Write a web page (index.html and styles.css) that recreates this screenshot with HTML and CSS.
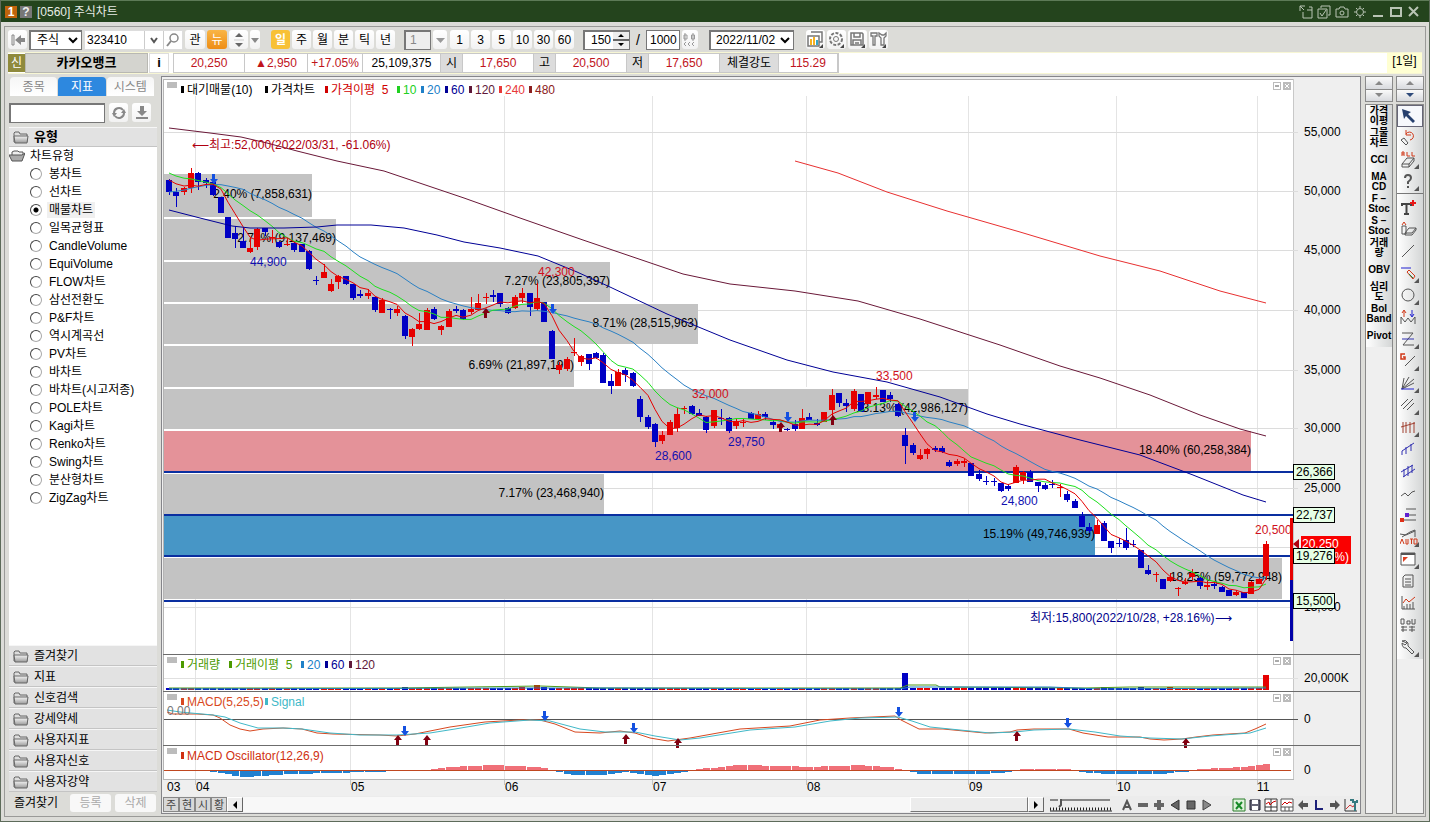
FILE: index.html
```html
<!DOCTYPE html>
<html lang="ko">
<head>
<meta charset="utf-8">
<title>[0560] 주식차트</title>
<link rel="stylesheet" href="styles.css">
</head>
<body>
<header class="titlebar">
  <span class="badge badge-orange">1</span><span class="badge badge-gray">?</span>
  <h1 class="title">[0560] 주식차트</h1>
  <div class="window-buttons">
    <button aria-label="분리"><svg width="14" height="14"><path d="M1 1h5M1 1v5M1 1l4 4M4 7v6h9V5H8M10 2h3v3" /></svg></button>
    <button aria-label="복사"><svg width="14" height="14"><path d="M4 3V1h9v9h-2M1 4h9v9H1zM3 8l2 3 4-6" /></svg></button>
    <button aria-label="캡처"><svg width="14" height="14"><path d="M1 4h3l1-2h4l1 2h3v8H1z" /><circle cx="7" cy="8" r="2" /></svg></button>
    <button aria-label="설정"><svg width="14" height="14"><circle cx="7" cy="7" r="3.5" /><path d="M7 1v2M7 11v2M1 7h2M11 7h2M3 3l1 1M10 10l1 1M11 3l-1 1M4 10l-1 1" /></svg></button>
    <button aria-label="최소화" class="big"><svg width="14" height="14"><path d="M2 11h10" /></svg></button>
    <button aria-label="최대화" class="big"><svg width="14" height="14"><path d="M2 3h10v8H2z" /></svg></button>
    <button aria-label="닫기" class="big"><svg width="14" height="14"><path d="M2 2l9 9M11 2l-9 9" /></svg></button>
  </div>
</header>

<main class="frame">
  <div class="toolbar">
    <button class="tool back" aria-label="처음"><svg width="16" height="14"><path d="M2 2v10h2V2z" fill="#eee" stroke="#888" /><path d="M15 5h-4V2L5 7l6 5V9h4z" fill="#888" /></svg></button>
    <select class="kind" aria-label="종류"><option>주식</option></select>
    <div class="code-box">
      <input class="code" aria-label="종목코드" value="323410">
      <button aria-label="목록"><svg width="10" height="8"><path d="M2 2l3 4 3-4" fill="none" stroke="#555" stroke-width="2" /></svg></button>
      <button aria-label="검색"><svg width="14" height="14"><circle cx="8" cy="5" r="4" fill="none" stroke="#888" stroke-width="1.5" /><path d="M5 8l-4 5" stroke="#888" stroke-width="2" /></svg></button>
    </div>
    <button class="tool w20">관</button>
    <button class="tool w20 orange">뉴</button>
    <button class="tool" aria-label="위아래"><svg width="10" height="16"><path d="M1 5l4-4 4 4zM1 11l4 4 4-4z" fill="#666" /><path d="M0 8h10" stroke="#ccc" /></svg></button>
    <button class="tool w10" aria-label="더보기"><svg width="8" height="6"><path d="M0 1h8l-4 5z" fill="#888" /></svg></button>
    <div class="group periods">
      <button class="tool yellow">일</button><button class="tool">주</button><button class="tool">월</button><button class="tool">분</button><button class="tool">틱</button><button class="tool">년</button>
    </div>
    <div class="group">
      <input class="unit" aria-label="단위" value="1" disabled>
      <button class="tool w14" aria-label="단위 목록"><svg width="9" height="6"><path d="M0 1h9l-4.500 5z" fill="#999" /></svg></button>
    </div>
    <div class="group minutes">
      <button class="tool">1</button><button class="tool">3</button><button class="tool">5</button><button class="tool">10</button><button class="tool">30</button><button class="tool">60</button>
    </div>
    <div class="group counts">
      <div class="spin"><input aria-label="표시 개수" value="150"><button aria-label="증감"><svg width="16" height="18"><path d="M5 6l3-3 3 3zM5 12l3 3 3-3z" fill="#000" /><path d="M0 9h16" stroke="#666" stroke-width="2" /></svg></button></div>
      <span class="slash">/</span>
      <input class="total" aria-label="전체 개수" value="1000">
      <button class="tool w16" aria-label="축소"><svg width="16" height="16"><path d="M2 3h3v4H2zM3 1v8M11 1v8M9.500 3h3v4h-3z" stroke="#999" fill="none" /><path d="M4 10l-2 2 2 2M8 10l-2 2 2 2M12 10l-2 2 2 2" fill="none" stroke="#999" /></svg></button>
    </div>
    <select class="date" aria-label="날짜"><option>2022/11/02</option></select>
    <div class="group icons">
      <button class="tool" aria-label="차트 설정"><svg width="17" height="17"><path d="M4 1h11v10h-3M1 5h11v10H1z" fill="#fff" stroke="#777" stroke-width="1.500" /><path d="M3 8h2v6H3z" fill="#f5b120" /><path d="M6 6h2v8H6z" fill="#f5b120" /><path d="M9 9h2v5H9z" fill="#35a6c8" /><path d="M16 17h-4l4-4z" fill="#444" /></svg></button>
      <button class="tool" aria-label="환경 설정"><svg width="17" height="17"><circle cx="8" cy="8" r="6" fill="none" stroke="#777" stroke-width="2" stroke-dasharray="3 1.500" /><circle cx="8" cy="8" r="2.500" fill="none" stroke="#777" /><path d="M16 17h-4l4-4z" fill="#444" /></svg></button>
      <button class="tool" aria-label="저장"><svg width="17" height="17"><path d="M2 2h11l1 1v11H2zM5 2v4h6V2M4 14V9h8v5M6 12h4" fill="none" stroke="#777" stroke-width="1.500" /><path d="M16 17h-4l4-4z" fill="#444" /></svg></button>
      <button class="tool" aria-label="도구"><svg width="17" height="17"><path d="M1 2h6v3H5v9H3V5H1zM9 2v3l2 2v7h3V7l2-2V2l-2 2h-2z" fill="none" stroke="#777" stroke-width="1.300" /><path d="M16 17h-4l4-4z" fill="#444" /></svg></button>
    </div>
  </div>

  <div class="quote">
    <span class="credit">신</span><strong class="name">카카오뱅크</strong><button class="info">i</button>
    <div class="cells">
      <span class="up c71">20,250</span><span class="up c63">▲2,950</span><span class="up c55">+17.05%</span><span class="c77">25,109,375</span><span class="label c22">시</span><span class="up c71">17,650</span><span class="label c22">고</span><span class="up c71">20,500</span><span class="label c22">저</span><span class="up c71">17,650</span><span class="label c60">체결강도</span><span class="up c60">115.29</span>
    </div>
    <span class="cycle">[1일]</span>
  </div>

  <div class="workspace">
    <aside class="sidebar">
      <div class="tabs"><button>종목</button><button class="active">지표</button><button>시스템</button></div>
      <div class="find">
        <input aria-label="지표 검색">
        <button class="tool" aria-label="새로고침"><svg width="14" height="14"><path d="M2 7a5 5 0 0 1 9-3M12 7a5 5 0 0 1-9 3" fill="none" stroke="#888" stroke-width="2" /><path d="M0 7h5L2 11zM14 7H9l3-4z" fill="#888" /></svg></button>
        <button class="tool" aria-label="내려받기"><svg width="14" height="15"><path d="M5 1h4v5h3l-5 5-5-5h3zM1 12h12v2H1z" fill="#888" /></svg></button>
      </div>
      <button class="folder head"><svg width="16" height="14"><use href="#folder" /></svg>유형</button>
      <div class="tree">
        <div class="root"><svg width="16" height="14"><path d="M3 6V3l2-1h4l1 1h4v3" fill="#eee" stroke="#555" /><path d="M0 6h13l3-2-3 8H3z" fill="#aaa" stroke="#555" /></svg>차트유형</div>
        <label><input type="radio" name="t"><span>봉차트</span></label>
        <label><input type="radio" name="t"><span>선차트</span></label>
        <label><input type="radio" name="t" checked><span>매물차트</span></label>
        <label><input type="radio" name="t"><span>일목균형표</span></label>
        <label><input type="radio" name="t"><span>CandleVolume</span></label>
        <label><input type="radio" name="t"><span>EquiVolume</span></label>
        <label><input type="radio" name="t"><span>FLOW차트</span></label>
        <label><input type="radio" name="t"><span>삼선전환도</span></label>
        <label><input type="radio" name="t"><span>P&amp;F차트</span></label>
        <label><input type="radio" name="t"><span>역시계곡선</span></label>
        <label><input type="radio" name="t"><span>PV차트</span></label>
        <label><input type="radio" name="t"><span>바차트</span></label>
        <label><input type="radio" name="t"><span>바차트(시고저종)</span></label>
        <label><input type="radio" name="t"><span>POLE차트</span></label>
        <label><input type="radio" name="t"><span>Kagi차트</span></label>
        <label><input type="radio" name="t"><span>Renko차트</span></label>
        <label><input type="radio" name="t"><span>Swing차트</span></label>
        <label><input type="radio" name="t"><span>분산형차트</span></label>
        <label><input type="radio" name="t"><span>ZigZag차트</span></label>
      </div>
      <button class="folder"><svg width="16" height="14"><use href="#folder" /></svg>즐겨찾기</button>
      <button class="folder"><svg width="16" height="14"><use href="#folder" /></svg>지표</button>
      <button class="folder"><svg width="16" height="14"><use href="#folder" /></svg>신호검색</button>
      <button class="folder"><svg width="16" height="14"><use href="#folder" /></svg>강세약세</button>
      <button class="folder"><svg width="16" height="14"><use href="#folder" /></svg>사용자지표</button>
      <button class="folder"><svg width="16" height="14"><use href="#folder" /></svg>사용자신호</button>
      <button class="folder"><svg width="16" height="14"><use href="#folder" /></svg>사용자강약</button>
      <div class="favorite"><span>즐겨찾기</span><button disabled>등록</button><button disabled>삭제</button></div>
    </aside>

    <section class="chart">
      <svg id="plot" class="plot" role="img" aria-label="카카오뱅크 일봉 차트"></svg>
      <div class="scroll">
        <button>주</button><button>현</button><button>시</button><button>황</button>
        <button class="arrow" aria-label="왼쪽"><svg width="6" height="8"><path d="M5 0v8L1 4z" /></svg></button>
        <div class="track"><div class="thumb"></div></div>
        <button class="arrow" aria-label="오른쪽"><svg width="6" height="8"><path d="M1 0v8l4-4z" /></svg></button>
        <svg class="zoomer" width="64" height="16"><path d="M1 3h8M13 3h48" stroke="#888" stroke-width="2" /><path d="M12 2v6l-2 2" fill="none" stroke="#555" stroke-width="2" /><path d="M1 12h62" stroke="#222" stroke-width="3" stroke-dasharray="1 2" /><path d="M1 14h62" stroke="#222" /></svg>
        <div class="play">
          <button aria-label="자동"><svg width="12" height="12"><path d="M2 11L6 2l4 9M3 8h6" fill="none" stroke="#555" stroke-width="2" /></svg></button>
          <button aria-label="축소"><svg width="12" height="12"><path d="M1 4h10v4H1z" fill="#666" /></svg></button>
          <button aria-label="확대"><svg width="12" height="12"><path d="M4 1h4v3h3v4H8v3H4V8H1V4h3z" fill="#666" /></svg></button>
          <button aria-label="뒤로"><svg width="12" height="12"><path d="M10 1v10L2 6z" fill="#666" stroke="#333" /></svg></button>
          <button aria-label="정지"><svg width="12" height="12"><path d="M2 2h8v8H2z" fill="#666" stroke="#333" /></svg></button>
          <button aria-label="재생"><svg width="12" height="12"><path d="M2 1v10l8-5z" fill="#888" stroke="#444" /></svg></button>
        </div>
        <div class="play files">
          <button aria-label="엑셀"><svg width="14" height="14"><path d="M1 1h12v12H1z" fill="#dff2dc" stroke="#2b7f2b" /><path d="M4 4l6 7M10 4l-6 7" stroke="#188a28" stroke-width="2" /></svg></button>
          <button aria-label="저장"><svg width="14" height="14"><path d="M2 2h10v10H2z" fill="#667" stroke="#223" /><path d="M4 2h6v4H4zM4 8h6v4H4z" fill="#fff" /></svg></button>
          <button aria-label="차트"><svg width="14" height="14"><path d="M1 1h12v12H1zM7 1v12M1 9h12" fill="#fff" stroke="#333" /><path d="M2 6l3-2 1 3 3-3 3-1" fill="none" stroke="#c00" /></svg></button>
          <button aria-label="차트 2"><svg width="14" height="14"><path d="M1 1h12v12H1zM1 9h12M5 9v4M9 9v4" fill="#fff" stroke="#555" /><path d="M2 7l3-3 2 2 2-2 3 1" fill="none" stroke="#c00" /></svg></button>
          <button aria-label="이전"><svg width="14" height="14"><path d="M12 5H7V2L2 7l5 5V9h5z" fill="#555" /></svg></button>
          <button aria-label="L"><svg width="14" height="14"><path d="M4 2v9h7" fill="none" stroke="#1b1f78" stroke-width="2" /></svg></button>
          <button aria-label="다음"><svg width="14" height="14"><path d="M2 5h5V2l5 5-5 5V9H2z" fill="#555" /></svg></button>
          <button aria-label="도구"><svg width="14" height="14"><path d="M1 1v12h12" fill="none" stroke="#333" /><path d="M2 11l4-4 3 2 4-6" fill="none" stroke="#c33" /><path d="M6 2h3v2h4V2M11 4v9" fill="none" stroke="#367a80" stroke-width="2" /></svg></button>
        </div>
      </div>
    </section>

    <div class="strip">
      <div class="pager"><button aria-label="위로"><svg width="10" height="6"><path d="M1 5h8L5 1z" fill="#888" /></svg></button><button aria-label="아래로"><svg width="10" height="6"><path d="M1 1h8L5 5z" fill="#888" /></svg></button></div>
      <div class="list"><div class="items words">
        <button>가격<br>이평</button><button>그물<br>차트</button><button>CCI</button><button>MA<br>CD</button><button>F −<br>Stoc</button><button>S −<br>Stoc</button><button>거래<br>량</button><button>OBV</button><button>심리<br>도</button><button>Bol<br>Band</button><button>Pivot</button>
      </div></div>
    </div>
    <div class="strip">
      <div class="pager"><button aria-label="위로"><svg width="10" height="6"><path d="M1 5h8L5 1z" fill="#888" /></svg></button><button aria-label="아래로"><svg width="10" height="6"><path d="M1 1h8L5 5z" fill="#2e4a7a" /></svg></button></div>
      <div class="list"><div class="items tools" id="tools"></div></div>
    </div>
  </div>
</main>

<svg class="defs" width="0" height="0" aria-hidden="true">
  <linearGradient id="fold" x2="0" y2="1"><stop offset="0" stop-color="#f4f4f4" /><stop offset="1" stop-color="#9a9a9a" /></linearGradient>
  <symbol id="folder" viewBox="0 0 16 14"><path d="M1 12V3l1-1h4l1 2h7v8z" fill="#ddd" stroke="#666" /><path d="M1 6h14l-1 7H2z" fill="url(#fold)" stroke="#666" /></symbol>
</svg>
<script src="chart.js"></script>
</body>
</html>
```
FILE: styles.css
```css
* { box-sizing: border-box; }
body {
  margin: 0;
  min-height: 100vh;
  display: flex;
  flex-direction: column;
  background: #dcdcd8;
  border: 1px solid #5d6b5a;
  border-width: 0 1px 1px;
  font: 12px/16px "Liberation Sans", "Noto Sans CJK KR", sans-serif;
  color: #000;
}
button, input, select { font: inherit; color: inherit; margin: 0; padding: 0; border-radius: 0; }
button { border: 0; background: none; display: flex; align-items: center; justify-content: center; }
svg { display: block; flex: none; }
.defs { position: absolute; }

.titlebar { height: 22px; background: #24441d; border-top: 1px solid #5d7a57; display: flex; align-items: center; padding: 0 8px 0 4px; color: #e8ece6; }
.badge { width: 12px; height: 12px; font-weight: bold; line-height: 12px; text-align: center; margin-right: 3px; }
.badge-orange { background: #c0640c; color: #fff; }
.badge-gray { background: #777; color: #eee; }
.title { margin: 0 0 0 2px; font-size: 12px; font-weight: normal; flex: 1; }
.window-buttons { display: flex; gap: 4px; }
.window-buttons path, .window-buttons circle { fill: none; stroke: #b9c4b5; }
.window-buttons .big path { stroke-width: 2; }

.frame { flex: 1; display: flex; flex-direction: column; margin: 4px 3px 4px; border: 1px solid #9a9a98; }

.toolbar { height: 25px; display: flex; align-items: center; gap: 2px; padding: 0 3px; }
.tool { width: 19px; height: 19px; background: linear-gradient(#fff, #f2f2f2); border-radius: 3px; flex: none; }
.w20 { width: 20px; }
.w10 { width: 10px; }
.w14 { width: 14px; }
.w16 { width: 16px; }
.orange { background: linear-gradient(#f9b545, #ee8d15); color: #fff; }
.yellow { background: #f8c136; color: #fff; font-weight: bold; }
.group { display: flex; gap: 2px; align-items: center; }
.periods { margin-left: 9px; }
.group + .group { margin-left: 7px; }
.group.minutes { margin-left: 1px; }
select, .unit, .total, .spin { height: 20px; border: 1px solid #777; background: #fff; }
.kind { width: 53px; padding-left: 2px; border-width: 2px 1px 1px 2px; }
.code-box { display: flex; background: #fff; height: 20px; border: 1px solid #ddd; width: 99px; }
.code-box button { width: 19px; border-left: 1px solid #ccc; }
.code { flex: 1; min-width: 0; border: 0; padding-left: 2px; }
.unit { width: 27px; padding-left: 4px; background: #eee; color: #888; border-width: 2px 1px 1px 2px; }
.spin { width: 47px; display: flex; border-width: 2px 1px 1px 2px; }
.spin input { flex: 1; min-width: 0; border: 0; text-align: right; padding-right: 2px; }
.spin button { background: #eee; }
.slash { width: 12px; text-align: center; font-size: 14px; }
.total { width: 34px; padding-left: 3px; }
.date { width: 85px; margin-left: 9px; border-width: 2px 1px 1px 2px; padding-left: 1px; }
.icons { margin-left: 10px; }

.quote { height: 22px; display: flex; align-items: stretch; background: #fff; margin: 0 3px; border: 1px solid #f7f6d4; border-width: 1px 0; line-height: 20px; }
.credit { width: 17px; background: #8f8a3c; color: #fff; text-align: center; margin: 1px 0; line-height: 18px; }
.name { width: 123px; background: #d4d4cf; text-align: center; font-size: 13px; border: 1px solid #b8b8b2; line-height: 17px; }
.info { width: 20px; margin: 0 4px 0 1px; border: 1px solid #ddd; font-weight: bold; font-size: 13px; }
.cells { display: flex; border: 1px solid #c8c8c8; line-height: 18px; text-align: center; }
.cells span { border-right: 1px solid #c8c8c8; }
.cells .label { background: #dcdcdc; }
.up { color: #c0141c; }
.c71 { width: 71px; }
.c63 { width: 63px; }
.c55 { width: 55px; }
.c77 { width: 78px; }
.c22 { width: 22px; }
.c60 { width: 59px; }
.cycle { width: 35px; margin-left: auto; background: #ffffd2; text-align: center; line-height: 16px; }

.workspace { flex: 1; display: flex; padding: 2px 1px 2px 4px; }
.sidebar { width: 148px; display: flex; flex-direction: column; margin-right: 4px; }
.tabs { display: flex; height: 19px; margin: 1px 3px 0 1px; gap: 1px; color: #888; }
.tabs button { flex: 1; background: linear-gradient(#f6f6f6, #fff); border-radius: 4px 4px 0 0; }
.tabs .active { background: #2d88df; color: #fff; }
.find { display: flex; gap: 4px; height: 20px; margin: 7px 0 4px; }
.find input { width: 96px; border: 1px solid #777; border-width: 2px 1px 1px 2px; }
.folder { height: 21px; flex: none; background: #e2e2e2; border-top: 1px solid #f6f6f6; border-bottom: 1px solid #c4c4c4; justify-content: flex-start; gap: 5px; padding-left: 4px; }
.folder.head { font-weight: bold; font-size: 13px; height: 20px; }
.tree { flex: 1; background: #fff; }
.root, .tree label { height: 18px; display: flex; align-items: center; }
.root { gap: 5px; }
.tree label { padding-left: 21px; gap: 5px; }
.tree label span { padding: 0 2px; }
.tree input { appearance: none; width: 12px; height: 12px; border: 1px solid #aaa; border-top-color: #444; border-left-color: #444; border-radius: 50%; background: #fff; }
.tree input:checked { background: radial-gradient(#000 0 2px, #fff 3px); }
.tree input:checked + span { background: #f0f0f0; }
.favorite { display: flex; align-items: center; height: 22px; gap: 4px; padding-left: 5px; }
.favorite span { width: 52px; }
.favorite button { width: 41px; height: 18px; background: #f8f8f8; border-radius: 3px; color: #aaa; }

.chart { flex: 1; min-width: 0; display: flex; flex-direction: column; border: 1px solid #85858a; background: #efefef; }
.plot { width: 100%; flex: 1; min-height: 0; }
.plot text { font: 12px "Liberation Sans", "Noto Sans CJK KR", sans-serif; white-space: pre; }
.plot .small { font-size: 11px; }
.scroll { height: 17px; display: flex; align-items: center; background: #ececec; padding: 0 2px 0 1px; }
.scroll > button { width: 16px; height: 15px; border: 1px solid #888; background: #d8d8d8; color: #444; font-size: 11px; flex: none; }
.scroll > .arrow { background: #eee; border-color: #fff #666 #666 #fff; }
.track { flex: 1; height: 15px; background: #f8f8f8; display: flex; justify-content: flex-end; }
.thumb { width: 118px; background: #ececec; border: 1px solid; border-color: #fff #777 #777 #fff; }
.zoomer { margin: 0 8px 0 5px; }
.play { display: flex; gap: 4px; }
.files { gap: 2px; margin-left: 19px; }

.strip { width: 28px; display: flex; flex-direction: column; gap: 2px; margin-left: 4px; }
.strip + .strip { margin-left: 3px; }
.pager { border: 1px solid #8a8a8a; height: 26px; display: grid; background: #8a8a8a; gap: 1px; }
.pager button { background: linear-gradient(#fafafa, #d8dade); }
.list { flex: 1; border: 1px solid #8a8a8a; background: #efefef; }
.items { background: linear-gradient(90deg, #fff, #d4d6d6); }
.words { font-size: 10px; line-height: 10px; font-weight: bold; }
.items button { width: 100%; height: 22px; }
.tools .on { background: #f6f8fc; border: 1px solid #667; }
.tools .rule { border-top: 1px solid #777; height: 26px; padding-top: 3px; }
```
FILE: chart.js
```js
const NS = 'http://www.w3.org/2000/svg';
const plot = document.getElementById('plot');
const root = document.createElementNS(NS, 'g');
root.setAttribute('transform', 'translate(-162 -77)');
plot.append(root);

function el(tag, attrs, text) {
  const node = document.createElementNS(NS, tag);
  for (const key in attrs) node.setAttribute(key, attrs[key]);
  if (text !== undefined) node.textContent = text;
  root.append(node);
  return node;
}
const rect = (x, y, w, h, fill, stroke) => el('rect', { x, y, width: w, height: h, fill, stroke: stroke || 'none' });
const line = (x1, y1, x2, y2, stroke, w = 1) => rect(Math.min(x1, x2), Math.min(y1, y2), x1 === x2 ? w : x2 - x1, y1 === y2 ? w : y2 - y1, stroke);
const text = (x, y, str, fill = '#000', anchor = 'start', cls = '') => el('text', { x, y, fill, 'text-anchor': anchor, class: cls }, str);
const poly = (points, stroke) => el('polyline', { points, fill: 'none', stroke, 'stroke-width': 1 });

const RED = '#e60000', BLUE = '#0000c4';
const X0 = 169, STEP = 7.362;
const xAt = i => Math.round(X0 + STEP * i);

// Plot backgrounds and grid
rect(164, 80, 1129, 699, '#fff');
line(163, 79, 1294, 79, '#b4b4b4');
line(163, 79, 163, 780, '#b4b4b4');
line(1293, 79, 1293, 780, '#c8c8c8');
line(163, 779, 1294, 779, '#b4b4b4');
for (const x of [195, 350, 504, 652, 806, 968, 1116, 1257]) {
  line(x, 96, x, 779, '#e4e4e4');
  line(x, 780, x, 785, '#c4c4c4');
}
const scale = [[132, '55,000'], [191, '50,000'], [250, '45,000'], [310, '40,000'], [370, '35,000'], [428, '30,000'], [488, '25,000'], [547, ''], [607, '15,000']];
for (const [y, label] of scale) {
  line(164, y, 1298, y, '#dcdcdc');
  text(1304, y + 4, label);
}

// Volume profile
const profile = [
  [174, 43, 312, '2.40% (7,858,631)'], [219, 41, 336, '2.79% (9,137,469)'], [262, 40, 610, '7.27% (23,805,397)'],
  [304, 40, 698, '8.71% (28,515,963)'], [346, 41, 574, '6.69% (21,897,191)'], [389, 40, 968, '13.13% (42,986,127)'],
  [431, 40, 1251, '18.40% (60,258,384)', '#e49299'], [474, 40, 604, '7.17% (23,468,940)'],
  [516, 39, 1095, '15.19% (49,746,939)', '#4796c6'], [558, 41, 1282, '18.25% (59,772,948)']
];
for (const [y, h, right, , fill] of profile) {
  rect(164, y - 2, right - 164, 2, '#fff');
  rect(164, y, right - 164, h, fill || '#c3c3c3');
}
for (const [y, h, right, label] of profile) text(right, y + (h >> 1) + 3, label, '#000', 'end');
for (const y of [471, 514, 555, 600]) line(164, y, 1293, y, '#0a2fa0', 2);

// Candles: direction, body top, body bottom, high, low
const candles = `B180,192,179,195 B192,196,188,207 R188,192,187,195 R173,188,168,193 B173,182,172,190 B180,183,178,188 B182,195,178,196 B197,213,197,213 B217,238,217,238 B233,239,226,248
B241,248,227,248 R248,252,238,253 R229,247,228,250 B228,232,228,236 R237,238,230,243 B242,247,241,248 R244,245,238,246 B243,250,242,252 B244,252,244,252 B251,269,250,270
B280,281,276,285 R272,278,264,278 R284,291,279,292 R276,282,275,289 B276,284,276,285 B284,298,284,300 B294,296,290,298 R293,296,289,299 B297,310,297,312 R300,313,298,313
B309,310,308,319 R309,313,306,316 B316,336,315,339 R329,337,328,346 R324,329,313,330 R310,330,308,330 B309,319,307,320 R326,330,325,335 R311,327,309,327 B309,311,306,313
B310,319,309,320 R309,312,297,314 R303,310,294,310 R297,298,293,304 B295,297,290,302 B293,304,293,307 B308,313,307,314 R297,308,295,309 R293,298,288,303 B293,307,293,316
R298,309,283,311 B302,322,302,322 B331,359,330,359 R365,370,362,374 R359,369,357,371 R352,353,338,356 R356,362,355,366 B354,364,354,370 B353,358,352,359 B355,383,353,383
B381,386,374,394 R372,386,369,386 B370,375,368,382 B373,386,372,387 B399,417,396,422 B417,427,415,429 B424,442,423,447 R435,441,431,444 R422,435,420,435 R414,428,408,432
R408,409,406,414 B406,414,405,415 B413,416,409,416 B417,430,416,433 R410,426,410,428 B418,419,409,425 B418,431,417,433 R421,426,418,429 R422,423,419,427 B413,419,412,419
R414,419,411,420 B414,417,412,420 B422,425,419,429 R424,428,423,429 B429,430,428,431 B424,429,420,431 R418,429,409,429 B417,420,413,420 B423,425,419,426 R412,422,412,422
R395,410,389,420 B393,403,393,407 B403,406,399,412 R391,409,389,411 B394,412,394,412 R392,404,392,404 R395,397,387,399 B390,402,390,402 B395,399,392,402 B404,416,403,417
B435,446,428,464 B445,453,443,455 R455,459,449,460 R449,454,448,459 B448,450,446,452 B448,452,446,453 B462,466,460,467 R461,464,459,466 R461,463,459,467 B463,476,463,476
B474,479,470,481 B481,482,476,485 B481,482,478,486 B483,491,483,492 B486,489,484,491 R467,483,465,483 R472,480,471,484 B472,482,470,482 B482,486,482,492 B485,489,483,490
B484,485,480,488 R487,488,484,497 B494,500,491,502 B501,508,499,508 B516,527,512,527 B527,531,523,533 R525,534,520,534 B523,541,521,541 B541,548,541,553 B543,544,538,547
B540,548,528,550 B544,545,540,547 B550,568,550,568 B570,574,565,575 R574,575,572,582 B579,589,579,589 R577,581,573,582 R588,589,587,596 R582,584,578,585 R573,577,569,580
B578,586,577,589 R585,587,581,590 B584,586,581,589 B587,592,586,592 B590,596,590,596 R592,595,590,596 B592,598,592,598 R582,594,581,594 R579,584,577,584 R544,576,541,580`
  .split(/\s+/).map(s => [s[0], ...s.slice(1).split(',').map(Number)]);
candles.forEach(([dir, top, bottom, high, low], i) => {
  const x = xAt(i), color = dir === 'R' ? RED : BLUE;
  rect(x - 3, top, 6, Math.max(1, bottom - top), color);
  rect(x, high, 1, low - high, color);
});

// Moving averages of the closes; earlier closes seed the first windows
const seed = [...Array(10).fill(211), ...Array(5).fill(166), ...Array(4).fill(177)];
const closes = seed.concat(candles.map(c => c[0] === 'R' ? c[1] : c[2]));
function average(n, color) {
  poly(candles.map((c, i) => {
    const part = closes.slice(i + 20 - n, i + 20);
    return xAt(i) + ',' + (part.reduce((a, b) => a + b) / n).toFixed(1);
  }).join(' '), color);
}
average(20, '#2a80c4');
average(10, '#1ee01e');
average(5, '#e60000');
poly('169,210 200,218 232,226 250,228 284,228 317,227 337,225 371,225 404,228 437,235 464,242 500,248 538,256 577,272 610,287 667,314 730,340 787,360 833,372 887,382 940,397 987,414 1020,424 1080,440 1140,455 1193,475 1243,495 1266,502', '#000096');
poly('169,128 210,133 241,137 267,143 297,151 337,161 384,171 464,198 520,218 583,240 633,257 683,274 730,284 795,291 858,301 920,319 1000,345 1060,366 1100,378 1150,395 1200,415 1240,429 1266,436', '#6a1838');
poly('795,161 838,173 887,192 947,211 1020,232 1100,256 1160,271 1220,291 1266,303', '#e83030');

function arrow(x, y, up) {
  const s = up ? -1 : 1;
  el('path', { d: `M${x - 1} ${y - 5 * s}h3v${5 * s}h3l-4 ${5 * s}l-4 ${-5 * s}h2z`, fill: up ? '#800010' : '#1450e0' });
}
[[213, 179], [552, 309], [787, 417], [914, 417]].forEach(p => arrow(...p, false));
[[485, 313], [780, 427], [832, 420]].forEach(p => arrow(...p, true));

// Price notes
text(192, 149, '⟵최고:52,000(2022/03/31, -61.06%)', '#b00010');
text(1030, 622, '최저:15,800(2022/10/28, +28.16%)⟶', '#00008c');
[[250, 266, '44,900'], [655, 460, '28,600'], [728, 446, '29,750'], [1001, 505, '24,800']].forEach(([x, y, s]) => text(x, y, s, '#1010b0'));
[[538, 276, '42,300'], [692, 398, '32,000'], [876, 380, '33,500'], [1255, 534, '20,500']].forEach(([x, y, s]) => text(x, y, s, '#d01020'));

// Price axis tags
rect(1290, 518, 3, 62, RED);
rect(1290, 580, 3, 61, '#0000a8');
rect(1301, 536, 50, 28, '#fa0000');
el('path', { d: 'M1299 539v10l-6-5z', fill: '#b00010' });
text(1302, 548, '20,250', '#fff');
text(1349, 561, '(+17.05%)', '#fff', 'end');
for (const [y, label] of [[464, '26,366'], [507, '22,737'], [548, '19,276'], [593, '15,500']]) {
  rect(1293.5, y + 0.5, 41, 15, '#e6ffe6', '#000');
  text(1296, y + 12, label);
}

// Sub-panel frames
for (const y of [654, 691, 745]) line(163, y, 1360, y, '#6c6c6c');
line(164, 678, 1298, 678, '#e0e0e0');
line(164, 719, 1298, 719, '#555');
for (const y of [82, 657, 694, 748]) {
  rect(167, y, 10, 6, '#bcbcbc');
  rect(1273.5, y + 0.5, 7, 7, '#fff', '#bbb');
  rect(1275, y + 3, 4, 2, '#aaa');
  rect(1283, y, 8, 8, '#bbb');
  poly(`1285,${y + 2} 1289,${y + 6}`, '#fff');
  poly(`1289,${y + 2} 1285,${y + 6}`, '#fff');
}
text(1304, 682, '20,000K');
text(1304, 723, '0');
text(1304, 774, '0');

// Volume
candles.forEach(([dir], i) => {
  const h = { 32: 3, 50: 5, 51: 3, 100: 17, 149: 15, 48: 3, 127: 3, 132: 3, 136: 3 }[i] || 2;
  rect(xAt(i) - 3, 690 - h, 6, h, dir === 'R' ? RED : BLUE);
});
poly('169,688 196,688 260,688 400,688 540,686 600,688 900,688 908,685 936,685 940,687 1085,688 1130,687 1266,687', '#4c9a18');
poly('169,689 530,688 620,688 900,689 910,687 1050,687 1100,689 1266,688', '#2080c0');

// MACD and signal
poly('167,712 173,714 197,714 213,715 220,718 230,725 240,729 250,731 263,729 283,728 302,729 317,733 333,734 380,735 397,736 415,734 430,731 450,727 485,722 520,720 540,720 555,724 575,732 600,733 620,731 635,733 650,738 668,741 690,738 740,729 790,726 820,720 850,718 895,716 901,720 919,729 943,729 985,733 1010,732 1017,730 1034,729 1069,729 1083,733 1108,737 1140,737 1150,739 1164,740 1182,739 1196,737 1213,735 1245,733 1255,729 1266,724', '#d84820');
poly('167,710 180,712 213,715 225,717 240,723 258,728 283,728 302,729 330,733 360,735 397,735 430,733 455,729 490,723 530,720 550,721 580,729 605,732 635,732 655,736 680,740 700,738 750,730 795,727 830,721 860,718 898,717 912,721 930,727 960,730 990,733 1015,732 1034,730 1069,729 1095,732 1120,736 1150,738 1182,739 1210,736 1250,733 1266,728', '#40b8c8');
[[404, 731], [544, 716], [633, 728], [898, 712], [1067, 723]].forEach(p => arrow(...p, false));
[[397, 740], [426, 740], [625, 739], [677, 743], [1016, 736], [1185, 743]].forEach(p => arrow(...p, true));
rect(163, 745, 1197, 1, '#6c6c6c');

// Oscillator
const envelope = [[169, 1], [205, 1], [225, 4], [245, 7], [262, 6], [290, 4], [330, 3], [370, 2], [405, 1], [430, 0], [450, -3], [495, -5], [540, -3], [552, 1], [575, 5], [605, 5], [625, 2], [655, 6], [680, 3], [700, -1], [740, -5], [790, -4], [805, -3], [860, -5], [890, -3], [905, 0], [920, 4], [980, 4], [1012, 2], [1024, -1], [1072, -1], [1082, 2], [1110, 4], [1165, 4], [1190, 1], [1200, -1], [1240, -3], [1266, -6]];
candles.forEach((c, i) => {
  const x = xAt(i);
  const k = Math.max(1, envelope.findIndex(p => p[0] >= x));
  const [ax, av] = envelope[k - 1], [bx, bv] = envelope[k];
  const v = Math.round(av + (bv - av) * (x - ax) / (bx - ax));
  if (v > 0) rect(x - 3, 770, 7, v, '#2080d0');
  if (v < 0) rect(x - 3, 770 + v, 7, -v, '#f07078');
});
line(164, 770, 1291, 770, '#c04820');

// Legends
function legend(y, entries) {
  for (const [x, label, color] of entries) {
    rect(x, y - 8, 3, 7, color);
    text(x + 6, y, label, color);
  }
}
legend(94, [[181, '대기매물(10)', '#000'], [265, '가격차트', '#000'], [325, '가격이평  5', '#d00000'], [397, '10', '#20d020'], [421, '20', '#2080c8'], [445, '60', '#000096'], [469, '120', '#601838'], [499, '240', '#e83838'], [529, '480', '#8c2020']]);
legend(669, [[181, '거래량', '#4c9a00'], [229, '거래이평  5', '#4c9a00'], [301, '20', '#2080c8'], [325, '60', '#000096'], [349, '120', '#601838']]);
legend(706, [[181, 'MACD(5,25,5)', '#d84820'], [265, 'Signal', '#40b8c8']]);
legend(760, [[181, 'MACD Oscillator(12,26,9)', '#d03010']]);
text(167, 715, '0.00', '#777');

[[167, '03'], [196, '04'], [351, '05'], [505, '06'], [653, '07'], [807, '08'], [969, '09'], [1117, '10'], [1257, '11']].forEach(([x, s]) => text(x, 791, s));

// Drawing tools: label, shapes, has a submenu
const G = 'stroke="#555" fill="none"', R = 'stroke="#d03818" fill="none"', B = 'stroke="#3030b0" fill="none"';
const tools = [
  ['선택', '<path d="M2 2l9 3-3 2 7 7-2 2-7-7-2 3z" fill="#26406e"/>'],
  ['되돌리기', `<path d="M6 5a4 4 0 1 1 4 6M6 1v5h5" ${R}/><path d="M1 11l3-2 4 5-2 2z" ${G}/>`],
  ['전체 삭제', `<path d="M2 5V1h2v4M2 3h2M7 1v4h3M12 1v4h3" ${R}/><path d="M2 13l5-6h7l-5 6zM2 13v3h7l5-6V7M9 13v3" ${G}/>`, 1],
  ['도움말', '<path d="M5 5q0-3 3-3t3 3q0 2-3 4v2M8 13v2" stroke="#555" stroke-width="2" fill="none"/>', 1],
  ['문자', '<path d="M2 7V5h9v2M6.500 5v10M4 15h5" stroke="#444" stroke-width="2" fill="none"/><path d="M13 1v6M10 4h6" stroke="#e81818" stroke-width="2"/>'],
  ['도형 지우기', `<path d="M2 5h4v8H2zM5 12l4-5h7l-4 5zM5 12v2h7l4-5V7" ${G}/><path d="M2 4l2-3 2 3" ${R}/>`],
  ['추세선', `<path d="M2 14L14 2" ${G}/>`],
  ['수평선', `<path d="M1 3h10" stroke="#2020d0"/><path d="M7 7l2-2 6 6-2 3z" ${R}/><path d="M9 9l4 4" stroke="#208040"/>`, 1],
  ['원', `<circle cx="8" cy="8" r="6" ${G}/>`, 1],
  ['파동', `<path d="M1 15V8l4 5 3-4 3 4 4-5v7" ${G}/><path d="M4 8V2M2 4l2-3 2 3" ${R}/><path d="M12 1v6M10 5l2 3 2-3" stroke="#2020d0" fill="none"/>`],
  ['Z형', `<path d="M2 2h11L3 14h11" ${G}/><path d="M2 8h12" ${B}/>`, 1],
  ['G선', `<path d="M5 1H1v5h4V4H3" stroke="#d03818" stroke-width="1.500" fill="none"/><path d="M5 13L15 3" ${G}/>`, 1],
  ['팬', `<path d="M2 14L4 3M2 14L9 2M2 14L14 4M2 14l12-6" ${G}/><path d="M1 14h13" stroke="#2020d0"/>`, 1],
  ['평행선', `<path d="M1 9l7-7M3 12L13 2M7 13l7-7" ${G}/>`, 1],
  ['주기', '<path d="M3 3v11M6 3v11M10 3v11M14 3v11M1 8l14-4" stroke="#a04030" fill="none"/>', 1],
  ['회귀', `<path d="M2 14v-4l12-8M6 13V6M11 10V3" ${B}/>`],
  ['채널', `<path d="M1 9l12-7M3 14l12-8M4 14V6M8 13V3M12 10V2" ${B}/>`],
  ['꺾은선', `<path d="M1 11l4-3 3 3 4-4 3-1" ${G}/>`],
  ['조절점', `<path d="M6 2h10M6 8h10M3 13h13" ${G}/><path d="M5 6h4v4H5z" fill="#6020d0"/><path d="M0 11h4v4H0z" fill="#e03018"/>`],
  ['자동 추세', `<path d="M0 5l6 1 9-4M2 8l8-5 5-2v7" ${G}/><path d="M0 15l2-5 2 5M6 10v5h2v-5M10 10h3M11.500 10v5M14 10h3v5h-3z" ${R}/>`, 1],
  ['창', '<path d="M1 2h14v12H1z" fill="#fff" stroke="#555"/><path d="M1 3h14" stroke="#555" stroke-width="2"/><path d="M3 6h5l-5 5z" fill="#e04020"/>', 1],
  ['문서', `<path d="M5 2h8v12H3V4zM5 6h6M5 9h6M5 12h6" ${G}/>`],
  ['지표 차트', `<path d="M2 1v13h13M4 14v-3M7 14V9M10 14V9M13 14V7" ${G}/><path d="M3 8l3-4 3 3 6-5" ${R}/>`],
  ['기간', `<path d="M1 2h3v5H1zM7 4v3h3V4zM12 2v5h3V2M1 10h6M1 13h6M3 9v6M9 10h6M9 13h6M12 9v6" ${G}/>`],
  ['도구 설정', `<path d="M2 2q4-2 6 2v3l6 6-2 2-6-6q-4 0-4-5l3 2 2-2z" ${G}/>`, 1]
];
const box = document.getElementById('tools');
tools.forEach(([name, shapes, more], i) => {
  const button = document.createElement('button');
  button.setAttribute('aria-label', name);
  if (i === 0) button.className = 'on';
  if (i === 4) button.className = 'rule';
  const corner = more ? '<path d="M19 13v5h-5z" fill="#555"/>' : '';
  button.innerHTML = `<svg width="20" height="18">${shapes}${corner}</svg>`;
  box.append(button);
});
```
